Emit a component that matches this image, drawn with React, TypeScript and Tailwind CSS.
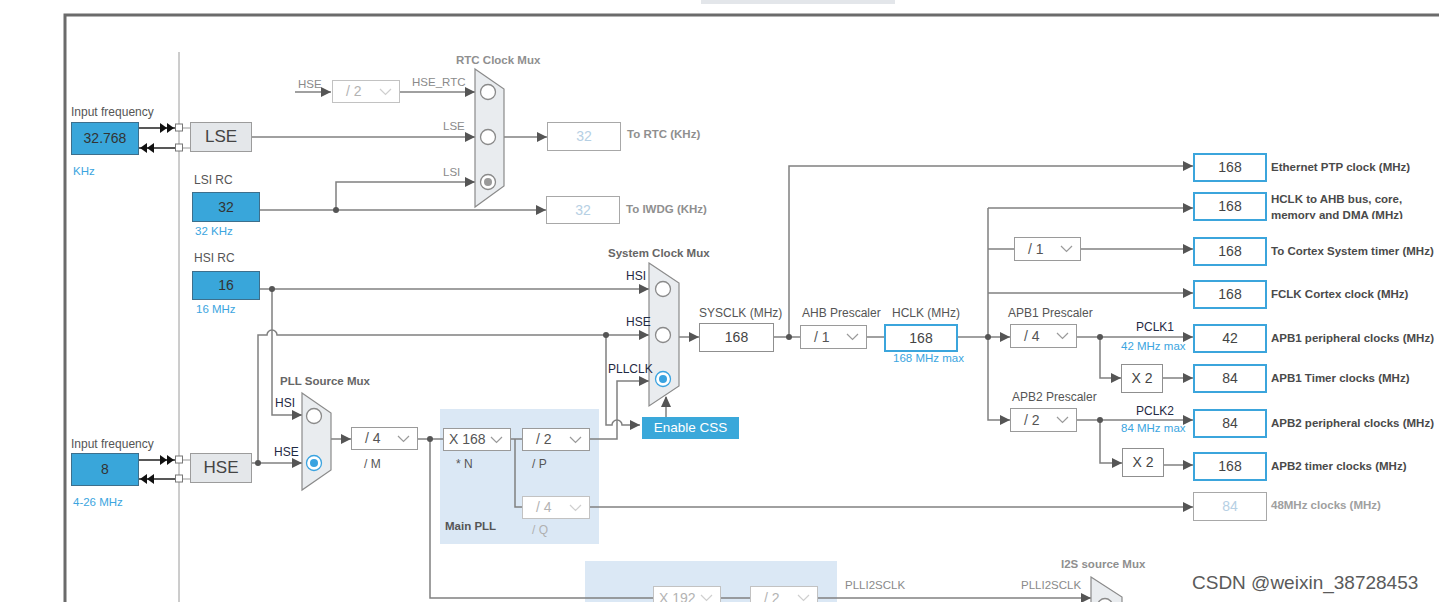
import React from "react";

const WIRE = "#808080";

type Node = { x: number; y: number; w: number; h: number; v: string };
type Txt = { x: number; y: number; t: string; c: string };

// input sources (filled blue)
const inputs: Node[] = [
  { x: 71, y: 122, w: 68, h: 33, v: "32.768" },
  { x: 192, y: 192, w: 68, h: 30, v: "32" },
  { x: 192, y: 271, w: 68, h: 29, v: "16" },
  { x: 71, y: 453, w: 68, h: 33, v: "8" },
];

// clock outputs with blue border
const outputs: (Node & { label: string })[] = [
  { x: 1193, y: 153, w: 74, h: 29, v: "168", label: "Ethernet PTP clock (MHz)" },
  { x: 1193, y: 237, w: 74, h: 29, v: "168", label: "To Cortex System timer (MHz)" },
  { x: 1193, y: 280, w: 74, h: 29, v: "168", label: "FCLK Cortex clock (MHz)" },
  { x: 1193, y: 324, w: 74, h: 29, v: "42", label: "APB1 peripheral clocks (MHz)" },
  { x: 1193, y: 364, w: 74, h: 29, v: "84", label: "APB1 Timer clocks (MHz)" },
  { x: 1193, y: 409, w: 74, h: 29, v: "84", label: "APB2 peripheral clocks (MHz)" },
  { x: 1193, y: 452, w: 74, h: 29, v: "168", label: "APB2 timer clocks (MHz)" },
];

const dims: Node[] = [
  { x: 547, y: 122, w: 74, h: 29, v: "32" },
  { x: 546, y: 196, w: 74, h: 28, v: "32" },
  { x: 1193, y: 492, w: 74, h: 29, v: "84" },
];

const drops: (Node & { dim?: boolean })[] = [
  { x: 332, y: 80, w: 68, h: 23, v: "/ 2", dim: true },
  { x: 351, y: 427, w: 67, h: 23, v: "/ 4" },
  { x: 443, y: 428, w: 68, h: 23, v: "X 168" },
  { x: 522, y: 428, w: 68, h: 23, v: "/ 2" },
  { x: 522, y: 496, w: 68, h: 23, v: "/ 4", dim: true },
  { x: 800, y: 325, w: 67, h: 24, v: "/ 1" },
  { x: 1014, y: 237, w: 67, h: 24, v: "/ 1" },
  { x: 1010, y: 324, w: 67, h: 24, v: "/ 4" },
  { x: 1010, y: 408, w: 67, h: 24, v: "/ 2" },
  { x: 653, y: 586, w: 68, h: 24, v: "X 192", dim: true },
  { x: 750, y: 586, w: 68, h: 24, v: "/ 2", dim: true },
];

const plain: Node[] = [
  { x: 699, y: 323, w: 75, h: 29, v: "168" },
  { x: 1121, y: 364, w: 42, h: 29, v: "X 2" },
  { x: 1122, y: 448, w: 42, h: 29, v: "X 2" },
];

const GREY = "text-[11.5px] text-[#8a8a8a]";
const NOTE = "text-[12px] text-[#555]";
const BLUE = "text-[11.5px] text-[#3ba5e0]";
const DARK = "text-[12px] text-[#1f2a44]";
const TITLE = "text-[11.5px] font-bold text-[#666]";
const TITLE_DIM = "text-[11.5px] font-bold text-[#8f8f8f]";

const texts: Txt[] = [
  { x: 71, y: 112, t: "Input frequency", c: NOTE },
  { x: 73, y: 171, t: "KHz", c: BLUE },
  { x: 194, y: 180, t: "LSI RC", c: NOTE },
  { x: 195, y: 231, t: "32 KHz", c: BLUE },
  { x: 194, y: 258, t: "HSI RC", c: NOTE },
  { x: 196, y: 309, t: "16 MHz", c: BLUE },
  { x: 71, y: 444, t: "Input frequency", c: NOTE },
  { x: 73, y: 502, t: "4-26 MHz", c: BLUE },
  { x: 298, y: 84, t: "HSE", c: GREY },
  { x: 412, y: 82, t: "HSE_RTC", c: GREY },
  { x: 443, y: 126, t: "LSE", c: GREY },
  { x: 443, y: 172, t: "LSI", c: GREY },
  { x: 456, y: 60, t: "RTC Clock Mux", c: TITLE_DIM },
  { x: 627, y: 134, t: "To RTC (KHz)", c: TITLE_DIM },
  { x: 626, y: 209, t: "To IWDG (KHz)", c: TITLE_DIM },
  { x: 608, y: 253, t: "System Clock Mux", c: TITLE },
  { x: 626, y: 276, t: "HSI", c: DARK },
  { x: 626, y: 322, t: "HSE", c: DARK },
  { x: 608, y: 369, t: "PLLCLK", c: DARK },
  { x: 280, y: 381, t: "PLL Source Mux", c: TITLE },
  { x: 275, y: 403, t: "HSI", c: DARK },
  { x: 274, y: 452, t: "HSE", c: DARK },
  { x: 364, y: 464, t: "/ M", c: NOTE },
  { x: 456, y: 464, t: "* N", c: NOTE },
  { x: 532, y: 464, t: "/ P", c: NOTE },
  { x: 532, y: 530, t: "/ Q", c: "text-[12px] text-[#b0b0b0]" },
  { x: 445, y: 526, t: "Main PLL", c: "text-[11.5px] font-bold text-[#555]" },
  { x: 699, y: 313, t: "SYSCLK (MHz)", c: NOTE },
  { x: 802, y: 313, t: "AHB Prescaler", c: NOTE },
  { x: 892, y: 313, t: "HCLK (MHz)", c: NOTE },
  { x: 893, y: 358, t: "168 MHz max", c: BLUE },
  { x: 1008, y: 313, t: "APB1 Prescaler", c: NOTE },
  { x: 1012, y: 397, t: "APB2 Prescaler", c: NOTE },
  { x: 1136, y: 327, t: "PCLK1", c: DARK },
  { x: 1121, y: 346, t: "42 MHz max", c: BLUE },
  { x: 1136, y: 411, t: "PCLK2", c: DARK },
  { x: 1121, y: 428, t: "84 MHz max", c: BLUE },
  { x: 1271, y: 505, t: "48MHz clocks (MHz)", c: "text-[11.5px] font-bold text-[#a0a0a0]" },
  { x: 845, y: 585, t: "PLLI2SCLK", c: GREY },
  { x: 1061, y: 564, t: "I2S source Mux", c: TITLE_DIM },
  { x: 1021, y: 585, t: "PLLI2SCLK", c: GREY },
];

const wires = [
  "M295 92 H331",
  "M400 92 H475",
  "M251 137 H475",
  "M260 210 H546",
  "M336 210 V182 H475",
  "M504 137 H547",
  "M260 289 H649",
  "M272 289 V415 H302",
  "M258 463 V335 H267 A5 5 0 0 1 277 335 H649",
  "M251 463 H302",
  "M606 335 V425 H612 A5 5 0 0 1 622 425 H640",
  "M590 439 H617 V381 H649",
  "M666 417 V397",
  "M679 337 H699",
  "M774 337 H800",
  "M789 337 V166 H1193",
  "M867 337 H884",
  "M957 337 H1010",
  "M988 208 V420 H1010",
  "M988 208 H1193",
  "M988 249 H1014",
  "M1081 249 H1193",
  "M988 293 H1193",
  "M1077 337 H1193",
  "M1100 337 V378 H1121",
  "M1163 378 H1193",
  "M1077 420 H1193",
  "M1100 420 V463 H1122",
  "M1164 465 H1193",
  "M331 439 H351",
  "M418 439 H443",
  "M430 439 V598 H653",
  "M511 439 H522",
  "M515 439 V507 H522",
  "M590 507 H1193",
  "M721 598 H750",
  "M818 598 H1091",
];

const arrows: [number, number][] = [
  [331, 92], [475, 92], [475, 137], [475, 182], [546, 210], [547, 137],
  [649, 289], [302, 415], [649, 335], [302, 463], [640, 425], [649, 381],
  [699, 337], [1193, 166], [1010, 337], [1010, 420], [1193, 208], [1193, 249],
  [1193, 293], [1193, 337], [1121, 378], [1193, 378], [1193, 420], [1122, 463],
  [1193, 465], [351, 439], [1193, 507], [1091, 598],
];

const dots: [number, number][] = [
  [336, 210], [272, 289], [258, 463], [606, 335], [789, 337], [988, 337], [1100, 337],
  [430, 439], [1100, 420],
];

const tri = (x: number, y: number) => `${x - 10},${y - 5} ${x},${y} ${x - 10},${y + 5}`;

function Radio({ cx, cy, on }: { cx: number; cy: number; on?: "grey" | "blue" }) {
  const ring = on === "blue" ? "#3aa3e0" : "#8a8a8a";
  return (
    <g>
      <circle cx={cx} cy={cy} r={7.5} fill="#fff" stroke={ring} strokeWidth={1.3} />
      {on && <circle cx={cx} cy={cy} r={4} fill={on === "blue" ? "#3aa3e0" : "#9a9a9a"} />}
    </g>
  );
}

function Diagram() {
  return (
    <svg className="absolute inset-0" width={1439} height={602} viewBox="0 0 1439 602">
      <rect x={701} y={0} width={194} height={4} fill="#e3e6ea" />
      <rect x={440} y={409} width={159} height={135} fill="#dbe8f5" />
      <rect x={585} y={561} width={252} height={41} fill="#dbe8f5" />
      <path d="M65 602 V15 H1439" fill="none" stroke="#6b6b6b" strokeWidth={3} />
      <path d="M179 52 V602" stroke="#9a9a9a" strokeWidth={1} />

      {/* oscillator pins */}
      <path d="M139 128 H182 M139 148 H182 M139 460 H182 M139 479 H182" stroke="#222" strokeWidth={1.4} />
      <path d="M182 128 H190 M182 148 H190 M182 460 H190 M182 479 H190" stroke="#999" strokeWidth={1} />
      {[128, 460].map((y) => (
        <g key={y} fill="#111">
          <polygon points={`${160},${y - 5} ${167},${y} ${160},${y + 5}`} />
          <polygon points={`${167},${y - 5} ${174},${y} ${167},${y + 5}`} />
        </g>
      ))}
      {[148, 479].map((y) => (
        <g key={y} fill="#111">
          <polygon points={`${147},${y - 5} ${140},${y} ${147},${y + 5}`} />
          <polygon points={`${154},${y - 5} ${147},${y} ${154},${y + 5}`} />
        </g>
      ))}
      {[124, 144, 456, 475].map((y) => (
        <rect key={y} x={175.5} y={y} width={7} height={7} fill="#fff" stroke="#777" strokeWidth={1} />
      ))}

      {wires.map((d) => (
        <path key={d} d={d} fill="none" stroke={WIRE} strokeWidth={1.5} />
      ))}
      {arrows.map(([x, y]) => (
        <polygon key={`${x}-${y}`} points={tri(x, y)} fill="#555" />
      ))}
      <polygon points="661,407 666,396 671,407" fill="#555" />
      {dots.map(([x, y]) => (
        <circle key={`${x}-${y}`} cx={x} cy={y} r={3} fill="#555" />
      ))}

      {/* muxes */}
      <polygon points="475,69 504,89 504,186 475,207" fill="#e9ecef" stroke="#8a8a8a" strokeWidth={1.2} />
      <Radio cx={488} cy={92} />
      <Radio cx={488} cy={137} />
      <Radio cx={488} cy={182} on="grey" />

      <polygon points="649,263 679,283 679,386 649,406" fill="#e9ecef" stroke="#8a8a8a" strokeWidth={1.2} />
      <Radio cx={663} cy={289} />
      <Radio cx={663} cy={335} />
      <Radio cx={663} cy={379} on="blue" />

      <polygon points="302,393 331,413 331,470 302,490" fill="#e9ecef" stroke="#8a8a8a" strokeWidth={1.2} />
      <Radio cx={314} cy={416} />
      <Radio cx={314} cy={463} on="blue" />

      <polygon points="1091,577 1122,597 1122,620 1091,640" fill="#e9ecef" stroke="#8a8a8a" strokeWidth={1.2} />
      <Radio cx={1105} cy={606} on="grey" />
    </svg>
  );
}

function Chevron({ dim }: { dim?: boolean }) {
  return (
    <svg width="13" height="8" viewBox="0 0 13 8" className="shrink-0">
      <polyline points="1,1 6.5,6.5 12,1" fill="none" stroke={dim ? "#cfcfcf" : "#9a9a9a"} strokeWidth={1.2} />
    </svg>
  );
}

export default function App() {
  const at = (n: { x: number; y: number; w: number; h: number }) => ({
    left: n.x,
    top: n.y,
    width: n.w,
    height: n.h,
  });

  return (
    <div
      className="relative h-[602px] w-[1439px] overflow-hidden bg-white"
      style={{ fontFamily: '"Liberation Sans", Arial, sans-serif' }}
    >
      <Diagram />

      {inputs.map((n) => (
        <div
          key={`${n.x}-${n.y}`}
          className="absolute flex items-center justify-center border border-[#3d6f8c] bg-[#39a6da] text-[14px] text-[#333]"
          style={at(n)}
        >
          {n.v}
        </div>
      ))}

      {[
        { x: 190, y: 122, w: 62, h: 30, v: "LSE" },
        { x: 190, y: 453, w: 62, h: 30, v: "HSE" },
      ].map((n) => (
        <div
          key={n.v}
          className="absolute flex items-center justify-center border border-[#9c9c9c] bg-[#e4e7ea] text-[17px] text-[#444]"
          style={at(n)}
        >
          {n.v}
        </div>
      ))}

      {dims.map((n) => (
        <div
          key={`${n.x}-${n.y}`}
          className="absolute flex items-center justify-center border border-[#a8a8a8] bg-white text-[14px] text-[#b6d0e4]"
          style={at(n)}
        >
          {n.v}
        </div>
      ))}

      {plain.map((n) => (
        <div
          key={`${n.x}-${n.y}`}
          className="absolute flex items-center justify-center border border-[#8f8f8f] bg-white text-[14px] text-[#444]"
          style={at(n)}
        >
          {n.v}
        </div>
      ))}

      <div
        className="absolute flex items-center justify-center border-2 border-[#3ba5dc] bg-white text-[14px] text-[#444]"
        style={at({ x: 884, y: 324, w: 74, h: 28 })}
      >
        168
      </div>

      {outputs.map((n) => (
        <React.Fragment key={n.label}>
          <div
            className="absolute flex items-center justify-center border-2 border-[#3ba5dc] bg-white text-[14px] text-[#444]"
            style={at(n)}
          >
            {n.v}
          </div>
          <div
            className="absolute whitespace-nowrap text-[11.5px] font-bold leading-[16px] text-[#4a4a4a]"
            style={{ left: 1271, top: n.y + n.h / 2 - 9 }}
          >
            {n.label}
          </div>
        </React.Fragment>
      ))}

      {/* two-line output, second line clipped */}
      <div
        className="absolute flex items-center justify-center border-2 border-[#3ba5dc] bg-white text-[14px] text-[#444]"
        style={at({ x: 1193, y: 192, w: 74, h: 29 })}
      >
        168
      </div>
      <div className="absolute left-[1271px] top-[191px] h-[28px] overflow-hidden text-[11.5px] font-bold leading-[16px] text-[#4a4a4a]">
        HCLK to AHB bus, core,
        <br />
        memory and DMA (MHz)
      </div>

      {drops.map((n) => (
        <div
          key={`${n.x}-${n.y}`}
          className={`absolute flex items-center justify-between whitespace-nowrap border bg-white pr-[7px] text-[14px] ${
            n.v.startsWith("X") ? "pl-[5px]" : "pl-[13px]"
          } ${n.dim ? "border-[#c2c2c2] text-[#b3b3b3]" : "border-[#9a9a9a] text-[#555]"}`}
          style={at(n)}
        >
          <span className="whitespace-nowrap">{n.v}</span>
          <Chevron dim={n.dim} />
        </div>
      ))}

      <div className="absolute left-[642px] top-[417px] flex h-[22px] w-[97px] items-center justify-center bg-[#3aa8da] text-[13.5px] text-white">
        Enable CSS
      </div>

      {texts.map((t) => (
        <div
          key={`${t.x}-${t.y}`}
          className={`absolute whitespace-nowrap leading-[16px] ${t.c}`}
          style={{ left: t.x, top: t.y - 8 }}
        >
          {t.t}
        </div>
      ))}

      <div className="absolute left-[1192px] top-[571px] whitespace-nowrap text-[19px] leading-[24px] text-[#5a5a5a]">
        CSDN @weixin_38728453
      </div>
    </div>
  );
}
